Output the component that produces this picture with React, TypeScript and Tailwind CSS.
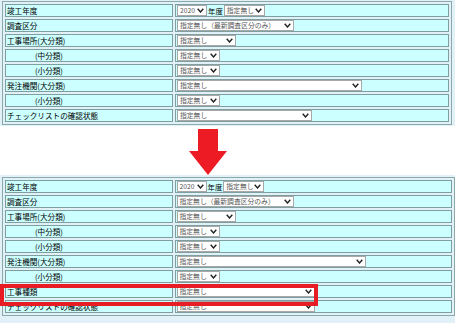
import React from "react";

type Row = { label: string; indent?: boolean; kind: "year" | "sel"; text?: string; w?: string };

const topRows: Row[] = [
  { label: "竣工年度", kind: "year" },
  { label: "調査区分", kind: "sel", text: "指定無し（最新調査区分のみ）", w: "w-[117px]" },
  { label: "工事場所(大分類)", kind: "sel", text: "指定無し", w: "w-[59px]" },
  { label: "(中分類)", indent: true, kind: "sel", text: "指定無し", w: "w-[43px]" },
  { label: "(小分類)", indent: true, kind: "sel", text: "指定無し", w: "w-[43px]" },
  { label: "発注機関(大分類)", kind: "sel", text: "指定無し", w: "w-[185px]" },
  { label: "(小分類)", indent: true, kind: "sel", text: "指定無し", w: "w-[43px]" },
  { label: "チェックリストの確認状態", kind: "sel", text: "指定無し", w: "w-[135px]" },
];

const bottomRows: Row[] = [
  ...topRows.slice(0, 5),
  { label: "発注機関(大分類)", kind: "sel", text: "指定無し", w: "w-[189px]" },
  { label: "(小分類)", indent: true, kind: "sel", text: "指定無し", w: "w-[43px]" },
  { label: "工事種類", kind: "sel", text: "指定無し", w: "w-[138px]" },
  { label: "チェックリストの確認状態", kind: "sel", text: "指定無し", w: "w-[138px]" },
];

const Chevron = () => (
  <svg width="7" height="5" viewBox="0 0 7 5" className="shrink-0">
    <polyline points="0.7,0.8 3.5,4 6.3,0.8" fill="none" stroke="#222" strokeWidth="1.4" />
  </svg>
);

function Sel({ text, w }: { text: string; w: string }) {
  return (
    <div className={`${w} flex h-[11px] items-center justify-between border border-[#a8a8a8] bg-white pl-[2px] pr-[2px] text-[6.8px] leading-none text-[#555]`}>
      <span className="whitespace-nowrap">{text}</span>
      <Chevron />
    </div>
  );
}

function SearchTable({ rows, wide }: { rows: Row[]; wide?: boolean }) {
  return (
    <table className="border-separate border-spacing-[2px] border border-[#8aa9a9]">
      <tbody>
        {rows.map((r, i) => (
          <tr key={i}>
            <td className="h-[13px] w-[168px] border border-[#7d9f9f] bg-[#ccffff] p-0 align-middle">
              <span className={`block whitespace-nowrap text-[7.6px] leading-none text-black ${r.indent ? "pl-[29px]" : "pl-[1px]"}`}>
                {r.label}
              </span>
            </td>
            <td className={`h-[13px] ${wide ? "w-[278px]" : "w-[274px]"} border border-[#7d9f9f] bg-[#ccffff] p-0 pl-[1px] align-middle`}>
              {r.kind === "year" ? (
                <div className="flex items-center">
                  <Sel text="2020" w="w-[30px]" />
                  <span className="px-[1px] text-[7.4px] leading-none text-black">年度</span>
                  <Sel text="指定無し" w="w-[41px]" />
                </div>
              ) : (
                <Sel text={r.text!} w={r.w!} />
              )}
            </td>
          </tr>
        ))}
      </tbody>
    </table>
  );
}

export default function App() {
  return (
    <div className="h-[323px] w-[455px] overflow-hidden bg-white font-['Noto_Sans_CJK_JP',sans-serif]">
      <div className="bg-[#e2f1f8] pl-[2px] pt-[1px] pb-[1px]">
        <SearchTable rows={topRows} />
      </div>

      <div className="h-[49px] pl-[188px]">
        <svg width="40" height="50" viewBox="0 0 40 50">
          <rect x="10" y="3" width="20" height="23" fill="#ed1c24" />
          <polygon points="1,25 39,25 20,49" fill="#ed1c24" />
        </svg>
      </div>

      <div className="relative h-[148px] bg-[#e2f1f8] pl-[2px] pt-[2px]">
        <SearchTable rows={bottomRows} wide />
        <div className="absolute left-0 top-[109px] h-[22px] w-[318px] border-4 border-[#e81c24]" />
      </div>
    </div>
  );
}
